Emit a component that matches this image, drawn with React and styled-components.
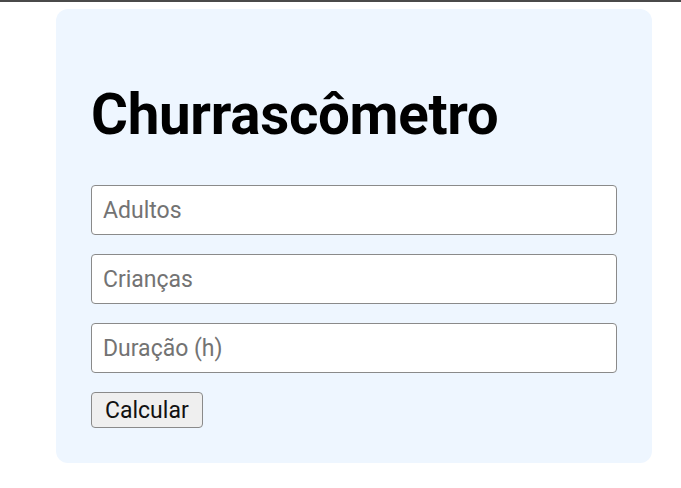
import React from "react";
import styled, { createGlobalStyle } from "styled-components";

const GlobalStyle = createGlobalStyle`
  html, body {
    margin: 0;
    padding: 0;
    background: #ffffff;
  }
  body {
    border-top: 2px solid #4a4a4a;
    font-family: Roboto, "Liberation Sans", sans-serif;
  }
`;

const Page = styled.div`
  padding: 7px 0 0 56px;
`;

const Card = styled.form`
  width: 596px;
  box-sizing: border-box;
  padding: 66px 35px 35px;
  background: #eef6ff;
  border-radius: 12px;
  display: flex;
  flex-direction: column;
`;

const Title = styled.h1`
  margin: 0 0 30px;
  font-family: Roboto, "Liberation Sans", sans-serif;
  font-weight: 700;
  font-size: 56.5px;
  line-height: 80px;
  color: #000;
  letter-spacing: -0.3px;
`;

const Fields = styled.div`
  display: flex;
  flex-direction: column;
  gap: 19px;
`;

const Field = styled.input`
  box-sizing: border-box;
  width: 100%;
  height: 50px;
  padding: 0 11px;
  border: 1.5px solid #8a8a8a;
  border-radius: 4px;
  background: #fff;
  font-family: Roboto, "Liberation Sans", sans-serif;
  font-size: 23px;
  color: #222;
  outline: none;

  &::placeholder {
    color: #737373;
  }
`;

const Button = styled.button`
  align-self: flex-start;
  margin-top: 19px;
  height: 36px;
  padding: 0 13px;
  border: 1.5px solid #8a8a8a;
  border-radius: 4px;
  background: #efefef;
  font-family: Roboto, "Liberation Sans", sans-serif;
  font-size: 23px;
  color: #111;
`;

export default function App() {
  return (
    <>
      <GlobalStyle />
      <Page>
        <Card onSubmit={(e) => e.preventDefault()}>
          <Title>Churrascômetro</Title>
          <Fields>
            <Field type="number" placeholder="Adultos" />
            <Field type="number" placeholder="Crianças" />
            <Field type="number" placeholder="Duração (h)" />
          </Fields>
          <Button type="submit">Calcular</Button>
        </Card>
      </Page>
    </>
  );
}
